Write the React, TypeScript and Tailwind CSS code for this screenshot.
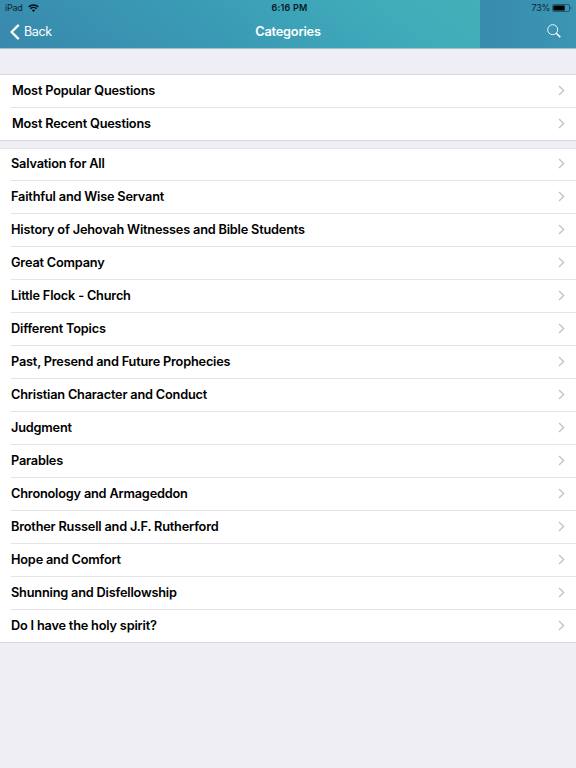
const popular = ["Most Popular Questions", "Most Recent Questions"];

const categories = [
  "Salvation for All",
  "Faithful and Wise Servant",
  "History of Jehovah Witnesses and Bible Students",
  "Great Company",
  "Little Flock - Church",
  "Different Topics",
  "Past, Presend and Future Prophecies",
  "Christian Character and Conduct",
  "Judgment",
  "Parables",
  "Chronology and Armageddon",
  "Brother Russell and J.F. Rutherford",
  "Hope and Comfort",
  "Shunning and Disfellowship",
  "Do I have the holy spirit?",
];

function Row({ label, last, inset }: { label: string; last: boolean; inset: boolean }) {
  return (
    <li className={last ? "h-[33px] border-b border-[#d9d9dd]" : "h-[33px]"}>
      <a
        className={
          (last ? "h-8 " : "ml-[11px] h-[33px] border-b border-[#e4e4e6] ") +
          "flex items-center justify-between pr-[11px] " +
          (last ? (inset ? "pl-3" : "pl-[11px]") : inset ? "pl-px" : "")
        }
      >
        <span className="whitespace-nowrap">{label}</span>
        <svg className="mb-px h-[11px] w-[7px]" viewBox="0 0 7 11" fill="none" stroke="#c3c3c8" strokeWidth="1.4">
          <path d="M1 1.1 5.6 5.5 1 9.9" />
        </svg>
      </a>
    </li>
  );
}

export default function App() {
  return (
    <div className="h-[768px] w-[576px] overflow-hidden bg-[#efeef4] font-['Inter',sans-serif] text-black">
      <header className="flex h-[49px] flex-col border-b border-[#a5c1cc] bg-[linear-gradient(90deg,transparent_480px,#388cae_480px,#3b95b3_576px),linear-gradient(35deg,#3888ad_0%,#3a9bb5_38%,#40acba_68%,#43afb5_88%)]">
        <div className="grid h-4 grid-cols-3 items-center pl-[5px] pr-[4px] text-[9px]">
          <div className="flex items-center gap-[5px] text-[#10252e]">
            <span className="tracking-[-0.25px]">iPad</span>
            <svg className="h-2 w-[11px]" viewBox="0 0 11 8" fill="none" stroke="#051015" strokeWidth="1.5">
              <path d="M.7 2.9a6.8 6.8 0 0 1 9.6 0M2.4 4.7a4.4 4.4 0 0 1 6.2 0" />
              <path d="M3.9 6.2a2.3 2.3 0 0 1 3.2 0L5.5 7.9Z" fill="#051015" stroke="none" />
            </svg>
          </div>
          <span className="pl-[2px] text-center font-semibold tracking-[0.2px] text-[#061a20]">6:16 PM</span>
          <div className="flex items-center justify-end gap-[2px] text-[#0b2530]">
            <span className="tracking-[-0.3px]">73%</span>
            <svg className="h-2 w-[20px]" viewBox="0 0 20 8">
              <rect x=".5" y=".5" width="17" height="7" rx="1.7" fill="none" stroke="#20586d" />
              <rect x="1.4" y="1.4" width="11.3" height="5.2" rx=".6" fill="#000" />
              <path d="M18.5 2.7q1.2.3 1.2 1.3t-1.2 1.3Z" fill="#20586d" />
            </svg>
          </div>
        </div>
        <div className="grid h-8 grid-cols-3 items-center pl-[10px] pr-[15px] text-[12.75px] tracking-[-0.2px] text-white">
          <div className="flex items-center gap-[4px]">
            <svg className="h-4 w-[10px]" viewBox="0 0 10 16" fill="none" stroke="white" strokeWidth="2.2">
              <path d="M8.7.9 1.6 8l7.1 7.1" />
            </svg>
            <span className="text-[12.5px] tracking-[-0.4px]">Back</span>
          </div>
          <span className="pl-[5px] text-center font-semibold">Categories</span>
          <svg className="h-[14px] w-[14px] -translate-y-px justify-self-end" viewBox="0 0 14 14" fill="none" stroke="white">
            <circle cx="5.7" cy="5.7" r="5" strokeWidth=".9" />
            <path d="m9.3 9.3 4 4" strokeWidth="1.6" />
          </svg>
        </div>
      </header>
      <main className="pt-[25px] text-[12.75px] font-semibold tracking-[-0.2px]">
        <ul className="border-t border-[#d9d9dd] bg-white">
          {popular.map((label, i) => (
            <Row key={label} label={label} inset last={i === popular.length - 1} />
          ))}
        </ul>
        <ul className="mt-[7px] bg-white shadow-[inset_0_1px_0_#e4e4e8]">
          {categories.map((label, i) => (
            <Row key={label} label={label} inset={false} last={i === categories.length - 1} />
          ))}
        </ul>
      </main>
    </div>
  );
}
